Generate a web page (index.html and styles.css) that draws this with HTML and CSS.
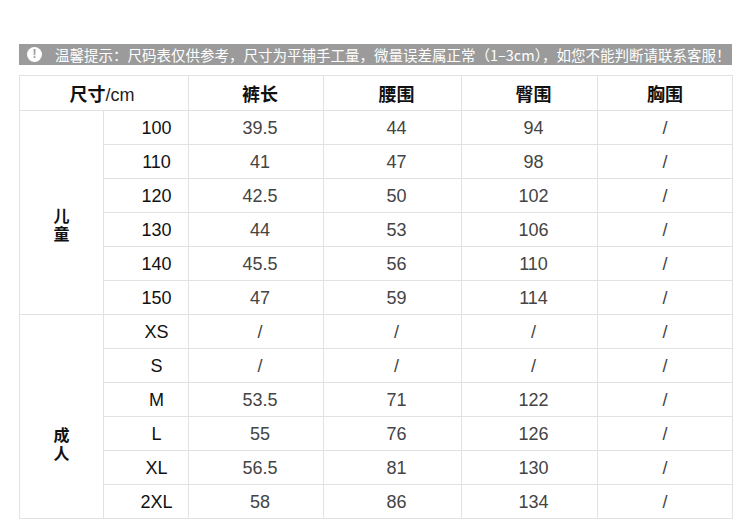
FILE: index.html
```html
<!DOCTYPE html>
<html lang="zh">
<head>
<meta charset="utf-8">
<link rel="stylesheet" href="styles.css">
</head>
<body>
<div class="page">
  <div class="notice">
    <span class="notice-icon">!</span>
    <span class="notice-text">温馨提示：尺码表仅供参考，尺寸为平铺手工量，微量误差属正常（1–3cm），如您不能判断请联系客服！</span>
  </div>
  <table class="size-table">
    <colgroup>
      <col class="c1"><col class="c2"><col class="c3"><col class="c4"><col class="c5"><col class="c6">
    </colgroup>
    <thead>
      <tr class="head-row">
        <th colspan="2" class="head-first">尺寸<span class="unit">/cm</span></th>
        <th class="shift">裤长</th><th class="shift">腰围</th><th class="shift">臀围</th><th>胸围</th>
      </tr>
    </thead>
    <tbody>
      <tr><td rowspan="6" class="group group-kids"><span class="vtext">儿童</span></td><td class="size">100</td><td class="shift">39.5</td><td class="shift">44</td><td class="shift">94</td><td>/</td></tr>
      <tr><td class="size">110</td><td class="shift">41</td><td class="shift">47</td><td class="shift">98</td><td>/</td></tr>
      <tr><td class="size">120</td><td class="shift">42.5</td><td class="shift">50</td><td class="shift">102</td><td>/</td></tr>
      <tr><td class="size">130</td><td class="shift">44</td><td class="shift">53</td><td class="shift">106</td><td>/</td></tr>
      <tr><td class="size">140</td><td class="shift">45.5</td><td class="shift">56</td><td class="shift">110</td><td>/</td></tr>
      <tr><td class="size">150</td><td class="shift">47</td><td class="shift">59</td><td class="shift">114</td><td>/</td></tr>
      <tr><td rowspan="6" class="group group-adult"><span class="vtext">成人</span></td><td class="size">XS</td><td class="shift">/</td><td class="shift">/</td><td class="shift">/</td><td>/</td></tr>
      <tr><td class="size">S</td><td class="shift">/</td><td class="shift">/</td><td class="shift">/</td><td>/</td></tr>
      <tr><td class="size">M</td><td class="shift">53.5</td><td class="shift">71</td><td class="shift">122</td><td>/</td></tr>
      <tr><td class="size">L</td><td class="shift">55</td><td class="shift">76</td><td class="shift">126</td><td>/</td></tr>
      <tr><td class="size">XL</td><td class="shift">56.5</td><td class="shift">81</td><td class="shift">130</td><td>/</td></tr>
      <tr><td class="size">2XL</td><td class="shift">58</td><td class="shift">86</td><td class="shift">134</td><td>/</td></tr>
    </tbody>
  </table>
</div>
</body>
</html>
```
FILE: styles.css
```css
html, body {
  margin: 0;
  padding: 0;
  background: #ffffff;
}
.page {
  width: 713px;
  padding: 44px 0 0 19px;
  font-family: "Liberation Sans", "Noto Sans CJK SC", sans-serif;
}
.notice {
  display: flex;
  align-items: center;
  height: 21px;
  background: #9b9b9b;
  color: #ffffff;
  padding-left: 8px;
  gap: 13px;
}
.notice-icon {
  width: 15px;
  height: 15px;
  border-radius: 50%;
  background: #ffffff;
  color: #9b9b9b;
  font-size: 12px;
  font-weight: bold;
  line-height: 15px;
  text-align: center;
  font-family: "Liberation Sans", sans-serif;
}
.notice-text {
  font-size: 14.5px;
  line-height: 21px;
  white-space: nowrap;
  font-family: "Noto Sans CJK SC", sans-serif;
  font-weight: 400;
}
.size-table {
  margin-top: 10px;
  border-collapse: collapse;
  table-layout: fixed;
  width: 713px;
}
.c1 { width: 84px; }
.c2 { width: 85px; }
.c3 { width: 135px; }
.c4 { width: 138px; }
.c5 { width: 136px; }
.c6 { width: 135px; }
.size-table th,
.size-table td {
  border: 1px solid #e2e2e2;
  text-align: center;
  padding: 0;
  color: #444444;
  font-size: 18px;
}
.size-table .shift {
  padding-left: 8px;
}
.head-row th {
  height: 34px;
  color: #111111;
  font-weight: bold;
  font-family: "Noto Sans CJK SC", sans-serif;
  font-size: 18px;
}
.head-row th.head-first {
  padding-right: 4px;
}
.unit {
  font-weight: normal;
  font-family: "Liberation Sans", sans-serif;
  color: #222222;
}
.size-table tbody td {
  height: 33px;
  line-height: 20px;
}
.size-table td.size {
  color: #111111;
  padding-left: 21px;
}
.size-table td.group {
  color: #111111;
  font-weight: bold;
  font-family: "Noto Sans CJK SC", sans-serif;
  font-size: 16px;
  line-height: 18px;
  vertical-align: top;
  padding-left: 0;
}
.vtext {
  display: inline-block;
  writing-mode: vertical-rl;
  text-orientation: upright;
  letter-spacing: 2px;
  line-height: 18px;
}
.size-table td.group-kids {
  padding-top: 97px;
}
.size-table td.group-adult {
  padding-top: 112px;
}
```
